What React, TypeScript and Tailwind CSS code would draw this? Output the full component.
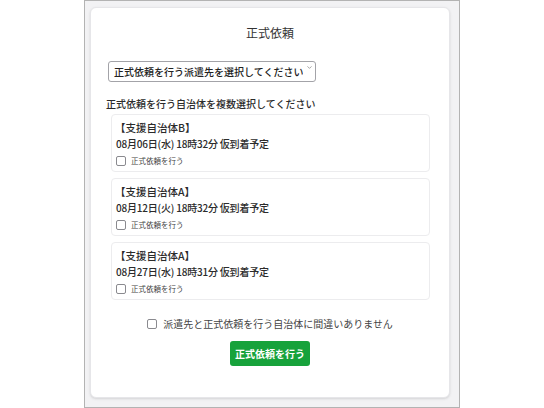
import { ChevronDown } from "lucide-react";

const requests = [
  { name: "【支援自治体B】", arrival: "08月06日(水) 18時32分 仮到着予定" },
  { name: "【支援自治体A】", arrival: "08月12日(火) 18時32分 仮到着予定" },
  { name: "【支援自治体A】", arrival: "08月27日(水) 18時31分 仮到着予定" },
];

export default function App() {
  return (
    <div className="w-[544px] h-[408px] bg-white font-['Noto_Sans_CJK_JP','Noto_Sans',sans-serif] text-[#2b2b2b]">
      <div className="ml-[84px] w-[376px] h-[408px] border border-[#b3b3b3] bg-[#f2f2f4] pl-[5px] pr-[9px] pt-[6px] pb-[9px]">
        <div className="h-full bg-white rounded-md border border-[#e6e6e9] shadow-sm px-[15px] pt-[16px] flex flex-col">
          <h1 className="text-center text-[12px] leading-[18px] text-[#333]">正式依頼</h1>

          <div className="relative mt-[15px] ml-[2px] w-[208px] h-[21px]">
            <select className="appearance-none w-full h-full border border-[#a3a3a8] rounded-[3px] bg-white pl-[5px] pr-[12px] text-[10px] font-medium text-[#222] outline-none">
              <option>正式依頼を行う派遣先を選択してください</option>
            </select>
            <ChevronDown className="absolute right-[3px] top-[7px] w-[7px] h-[7px] text-[#666] pointer-events-none" strokeWidth={2} />
          </div>

          <p className="mt-[18px] text-[10px] leading-[15px] font-medium">
            正式依頼を行う自治体を複数選択してください
          </p>

          <div className="mt-[3px] ml-[5px] mr-[4px] flex flex-col gap-[6px]">
            {requests.map((r, i) => (
              <div key={i} className="h-[58px] border border-[#ececee] rounded-[4px] pl-[3px] pt-[5px]">
                <div className="text-[10.5px] leading-[16px] font-medium">{r.name}</div>
                <div className="pl-[1px] text-[10px] leading-[16px] font-medium tracking-[-0.2px]">{r.arrival}</div>
                <label className="mt-[2px] pl-[1px] flex items-center gap-[5px] h-[14px]">
                  <input type="checkbox" className="appearance-none w-[10px] h-[10px] border border-[#8a8a8f] rounded-[2px] bg-white" />
                  <span className="text-[7.5px] leading-[14px] text-[#444]">正式依頼を行う</span>
                </label>
              </div>
            ))}
          </div>

          <label className="mt-[16px] flex items-center justify-center gap-[6px] h-[15px]">
            <input type="checkbox" className="appearance-none w-[10px] h-[10px] border border-[#8a8a8f] rounded-[2px] bg-white" />
            <span className="text-[10px] leading-[15px] text-[#444]">派遣先と正式依頼を行う自治体に間違いありません</span>
          </label>

          <div className="mt-[10px] flex justify-center">
            <button className="w-[80px] h-[25px] rounded-[3px] bg-[#17a23b] text-white text-[10px] font-bold">
              正式依頼を行う
            </button>
          </div>
        </div>
      </div>
    </div>
  );
}
